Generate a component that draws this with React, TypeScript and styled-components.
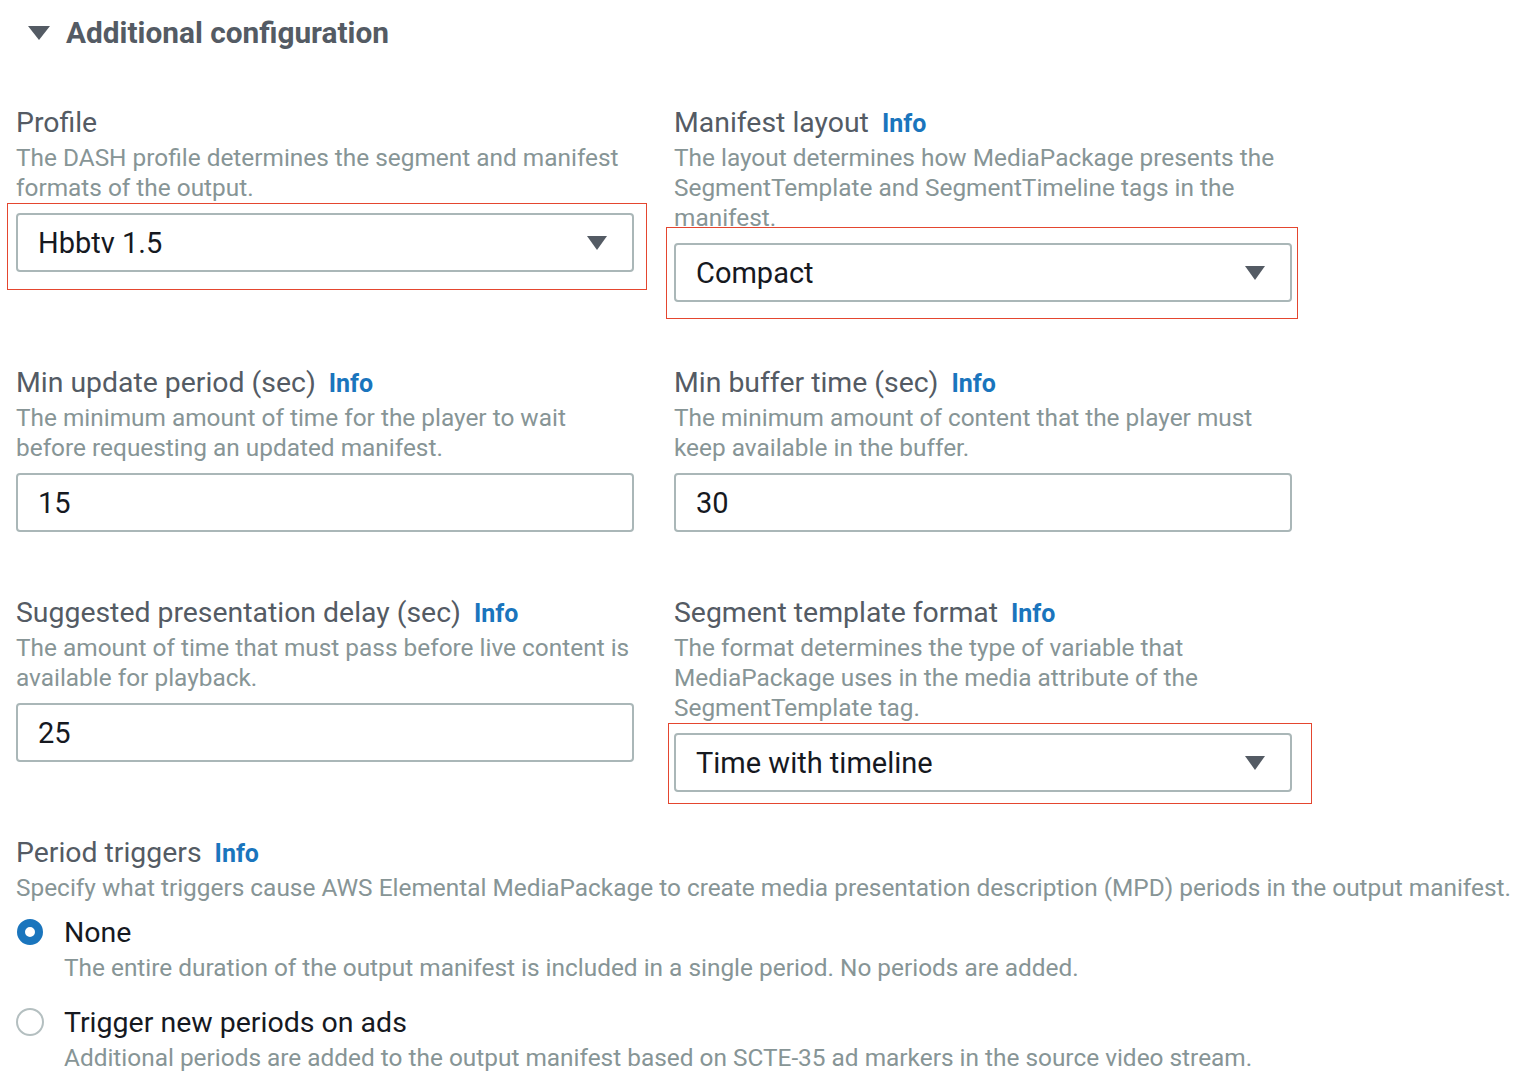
import React from "react";
import styled, { createGlobalStyle } from "styled-components";

const GlobalStyle = createGlobalStyle`
  html, body { margin: 0; padding: 0; background: #ffffff; }
  body {
    font-family: Roboto, "Noto Sans", "Liberation Sans", sans-serif;
    -webkit-font-smoothing: antialiased;
  }
`;

const Page = styled.div`
  width: 1520px;
  height: 1084px;
  overflow: hidden;
  box-sizing: border-box;
  padding-left: 16px;
`;

const Header = styled.div`
  display: flex;
  align-items: center;
  gap: 16px;
  padding-top: 18px;
  height: 30px;
  margin-left: 12px;
  color: #545b64;
  font-size: 29.8px;
  font-weight: 700;
  line-height: 30px;
`;

const Caret = styled.svg`
  flex: none;
  display: block;
`;

const Grid = styled.div`
  display: grid;
  grid-template-columns: 618px 618px;
  column-gap: 40px;
  row-gap: 66px;
  align-items: start;
  margin-top: 60px;
`;

const Field = styled.div`
  display: flex;
  flex-direction: column;
`;

const Label = styled.div`
  display: flex;
  align-items: baseline;
  gap: 13px;
  height: 30px;
  overflow: visible;
  color: #545b64;
  font-size: 28.4px;
  line-height: 30px;
  white-space: nowrap;
`;

const InfoLink = styled.a`
  color: #1a75bd;
  font-weight: 700;
  font-size: 25px;
  text-decoration: none;
`;

const Description = styled.div`
  margin-top: 5px;
  color: #879596;
  font-size: 24.4px;
  line-height: 30px;
  white-space: nowrap;
`;

const ControlWrap = styled.div`
  position: relative;
  margin-top: 10px;
`;

const Box = styled.div`
  box-sizing: border-box;
  height: 59px;
  border: 2px solid #aab7b8;
  border-radius: 4px;
  display: flex;
  align-items: center;
  justify-content: space-between;
  padding: 0 25px 0 20px;
  color: #16191f;
  font-size: 29px;
  background: #fff;
`;

const Highlight = styled.div<{ $t: number; $l: number; $r: number; $b: number }>`
  position: absolute;
  top: ${(p) => -p.$t}px;
  left: ${(p) => -p.$l}px;
  right: ${(p) => -p.$r}px;
  bottom: ${(p) => -p.$b}px;
  border: 1px solid #e4462f;
  pointer-events: none;
`;

const Section = styled.div`
  margin-top: 46px;
`;

const RadioGroup = styled.div`
  display: flex;
  flex-direction: column;
  gap: 25px;
  margin-top: 15px;
`;

const RadioItem = styled.div`
  display: grid;
  grid-template-columns: 48px 1fr;
`;

const RadioCircle = styled.span<{ $checked?: boolean }>`
  box-sizing: border-box;
  display: block;
  width: ${(p) => (p.$checked ? 26 : 28)}px;
  height: ${(p) => (p.$checked ? 26 : 28)}px;
  margin: ${(p) => (p.$checked ? "1px 0 0 1px" : "0")};
  border-radius: 50%;
  background: #fff;
  border: ${(p) => (p.$checked ? "8px solid #1a75bd" : "2px solid #b4bfc0")};
`;

const RadioText = styled.div`
  display: flex;
  flex-direction: column;
`;

const RadioLabel = styled.div`
  color: #16191f;
  font-size: 28.5px;
  line-height: 30px;
`;

const DownArrow = () => (
  <Caret width="20" height="14" viewBox="0 0 20 14">
    <path d="M0 0 H20 L10 14 Z" fill="#545b64" />
  </Caret>
);

type Hl = { t: number; l: number; r: number; b: number };

const Select = ({ value, hl }: { value: string; hl?: Hl }) => (
  <ControlWrap>
    <Box>
      <span>{value}</span>
      <DownArrow />
    </Box>
    {hl && <Highlight $t={hl.t} $l={hl.l} $r={hl.r} $b={hl.b} />}
  </ControlWrap>
);

const Input = ({ value }: { value: string }) => (
  <ControlWrap>
    <Box>
      <span>{value}</span>
    </Box>
  </ControlWrap>
);

const Lines = ({ lines }: { lines: string[] }) => (
  <Description>
    {lines.map((l, i) => (
      <div key={i}>{l}</div>
    ))}
  </Description>
);

export default function App() {
  return (
    <>
      <GlobalStyle />
      <Page>
        <Header>
          <Caret width="22" height="14" viewBox="0 0 22 14">
            <path d="M0 0 H22 L11 14 Z" fill="#545b64" />
          </Caret>
          <span>Additional configuration</span>
        </Header>

        <Grid>
          <Field>
            <Label>Profile</Label>
            <Lines
              lines={[
                "The DASH profile determines the segment and manifest",
                "formats of the output.",
              ]}
            />
            <Select value="Hbbtv 1.5" hl={{ t: 10, l: 9, r: 13, b: 18 }} />
          </Field>
          <Field>
            <Label>
              Manifest layout <InfoLink href="#">Info</InfoLink>
            </Label>
            <Lines
              lines={[
                "The layout determines how MediaPackage presents the",
                "SegmentTemplate and SegmentTimeline tags in the",
                "manifest.",
              ]}
            />
            <Select value="Compact" hl={{ t: 16, l: 8, r: 6, b: 17 }} />
          </Field>

          <Field>
            <Label>
              Min update period (sec) <InfoLink href="#">Info</InfoLink>
            </Label>
            <Lines
              lines={[
                "The minimum amount of time for the player to wait",
                "before requesting an updated manifest.",
              ]}
            />
            <Input value="15" />
          </Field>
          <Field>
            <Label>
              Min buffer time (sec) <InfoLink href="#">Info</InfoLink>
            </Label>
            <Lines
              lines={[
                "The minimum amount of content that the player must",
                "keep available in the buffer.",
              ]}
            />
            <Input value="30" />
          </Field>

          <Field>
            <Label>
              Suggested presentation delay (sec) <InfoLink href="#">Info</InfoLink>
            </Label>
            <Lines
              lines={[
                "The amount of time that must pass before live content is",
                "available for playback.",
              ]}
            />
            <Input value="25" />
          </Field>
          <Field>
            <Label>
              Segment template format <InfoLink href="#">Info</InfoLink>
            </Label>
            <Lines
              lines={[
                "The format determines the type of variable that",
                "MediaPackage uses in the media attribute of the",
                "SegmentTemplate tag.",
              ]}
            />
            <Select value="Time with timeline" hl={{ t: 10, l: 6, r: 20, b: 12 }} />
          </Field>
        </Grid>

        <Section>
          <Label>
            Period triggers <InfoLink href="#">Info</InfoLink>
          </Label>
          <Description>
            Specify what triggers cause AWS Elemental MediaPackage to create media presentation
            description (MPD) periods in the output manifest.
          </Description>
          <RadioGroup>
            <RadioItem>
              <RadioCircle $checked />
              <RadioText>
                <RadioLabel>None</RadioLabel>
                <Description>
                  The entire duration of the output manifest is included in a single period. No
                  periods are added.
                </Description>
              </RadioText>
            </RadioItem>
            <RadioItem>
              <RadioCircle />
              <RadioText>
                <RadioLabel>Trigger new periods on ads</RadioLabel>
                <Description>
                  Additional periods are added to the output manifest based on SCTE-35 ad markers
                  in the source video stream.
                </Description>
              </RadioText>
            </RadioItem>
          </RadioGroup>
        </Section>
      </Page>
    </>
  );
}
